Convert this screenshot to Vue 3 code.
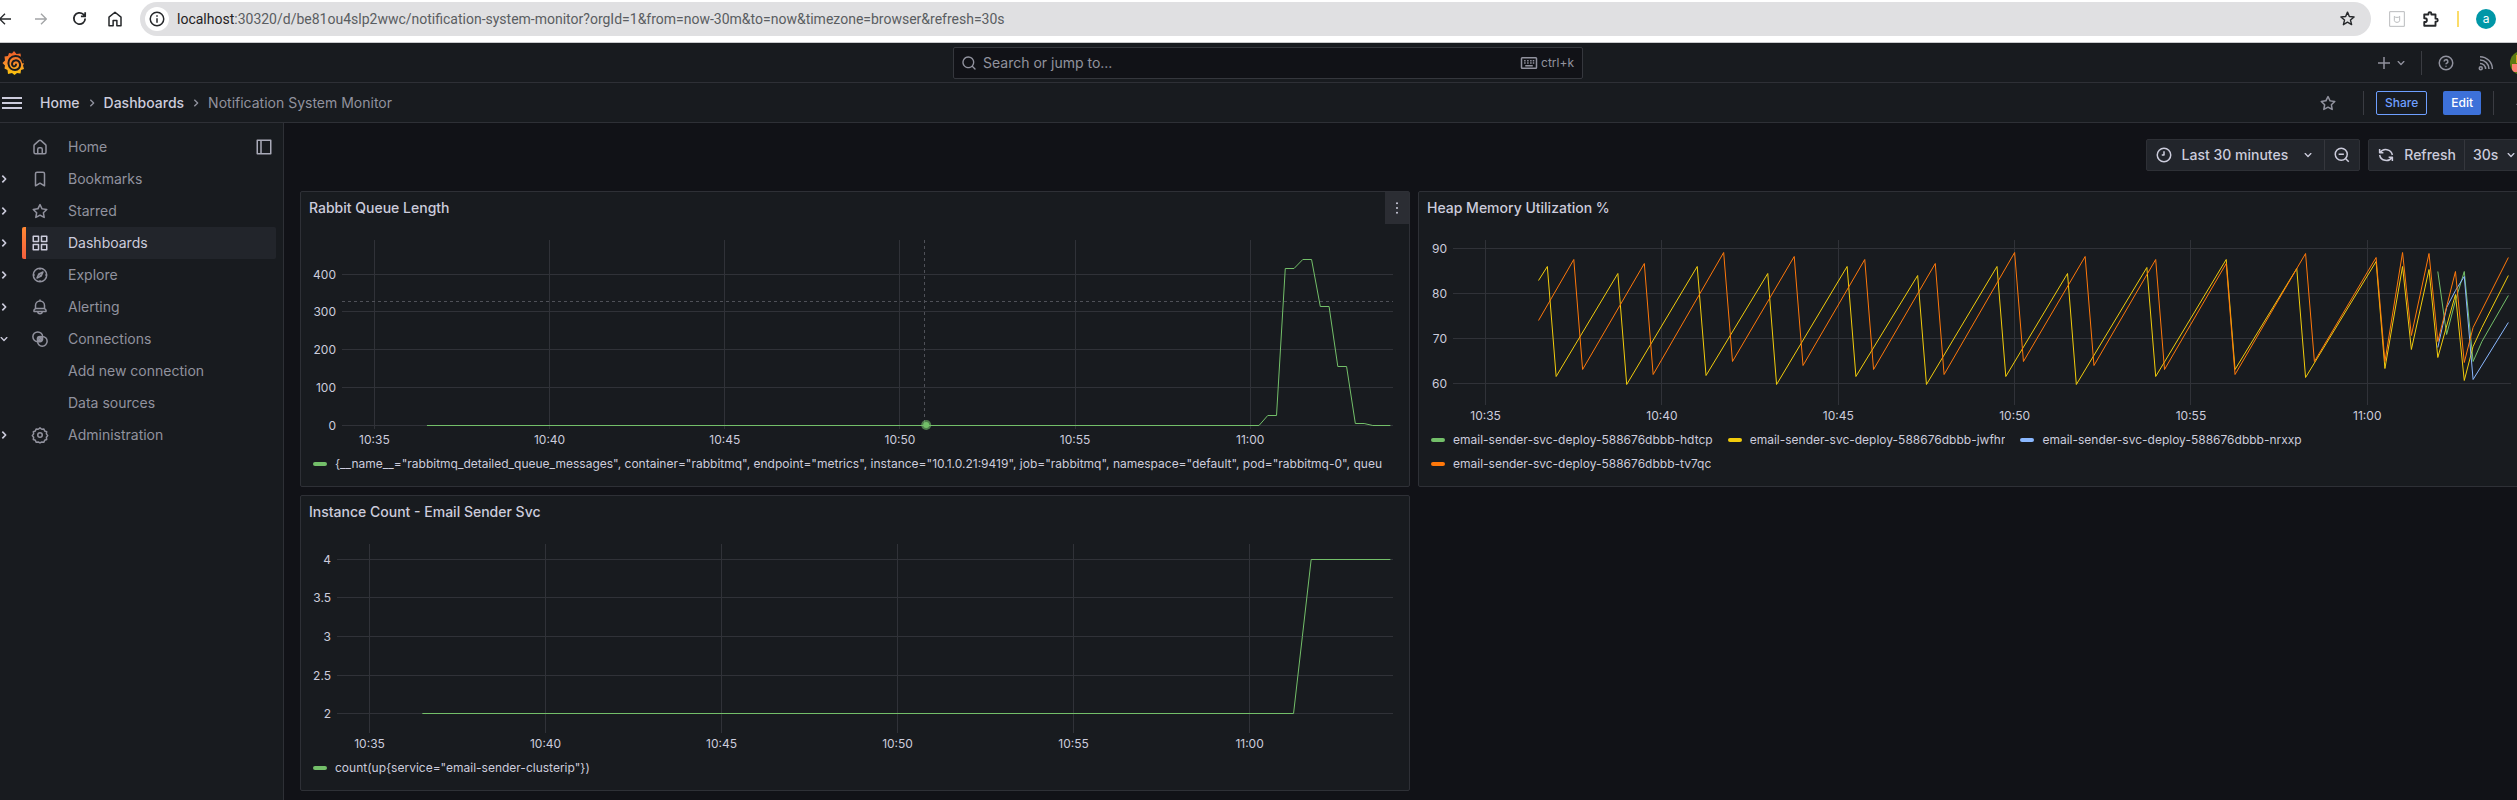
<script setup>
import { h } from 'vue'

const fills = {
  home: 'M20,8h0L14,2.74a3,3,0,0,0-4,0L4,8a3,3,0,0,0-1,2.26V19a3,3,0,0,0,3,3H18a3,3,0,0,0,3-3V10.25A3,3,0,0,0,20,8ZM14,20H10V15a1,1,0,0,1,1-1h2a1,1,0,0,1,1,1Zm5-1a1,1,0,0,1-1,1H16V15a3,3,0,0,0-3-3H11a3,3,0,0,0-3,3v5H6a1,1,0,0,1-1-1V10.25a1,1,0,0,1,.34-.75l6-5.25a1,1,0,0,1,1.32,0l6,5.25a1,1,0,0,1,.34.75Z',
  bookmark: 'M16,2H8A3,3,0,0,0,5,5V21a1,1,0,0,0,.5.87,1,1,0,0,0,1,0L12,18.69l5.5,3.18A1,1,0,0,0,18,22a1,1,0,0,0,.5-.13A1,1,0,0,0,19,21V5A3,3,0,0,0,16,2Zm1,17.27-4.5-2.6a1,1,0,0,0-1,0L7,19.27V5A1,1,0,0,1,8,4h8a1,1,0,0,1,1,1Z',
  star: 'M22,9.67A1,1,0,0,0,21.14,9l-5.69-.83L12.9,3a1,1,0,0,0-1.8,0L8.55,8.16,2.86,9a1,1,0,0,0-.81.68,1,1,0,0,0,.25,1l4.13,4-1,5.68A1,1,0,0,0,6.9,21.44L12,18.77l5.1,2.67a.93.93,0,0,0,.46.12,1,1,0,0,0,.59-.19,1,1,0,0,0,.4-1l-1-5.68,4.13-4A1,1,0,0,0,22,9.67Zm-6.15,4a1,1,0,0,0-.29.88l.72,4.2-3.76-2a1.06,1.06,0,0,0-.94,0l-3.76,2,.72-4.2a1,1,0,0,0-.29-.88l-3-3,4.21-.61a1,1,0,0,0,.76-.55L12,5.7l1.88,3.82a1,1,0,0,0,.76.55l4.21.61Z',
  down: 'M17,9.17a1,1,0,0,0-1.41,0L12,12.71,8.46,9.17a1,1,0,0,0-1.41,0,1,1,0,0,0,0,1.42l4.24,4.24a1,1,0,0,0,1.42,0L17,10.59A1,1,0,0,0,17,9.17Z',
  search: 'M21.71,20.29,18,16.61A9,9,0,1,0,16.61,18l3.68,3.68a1,1,0,0,0,1.42,0A1,1,0,0,0,21.71,20.29ZM11,18a7,7,0,1,1,7-7A7,7,0,0,1,11,18Z',
  dots: 'M12 3.500a1.500 1.500 0 1 1 0 3a1.500 1.500 0 0 1 0-3zM12 10.500a1.500 1.500 0 1 1 0 3a1.500 1.500 0 0 1 0-3zM12 17.500a1.500 1.500 0 1 1 0 3a1.500 1.500 0 0 1 0-3z',
}
const strokes = {
  right: 'M9.5 7l5 5l-5 5',
  up: 'M7 14.5l5-5l5 5',
  apps: 'M3 3h7v7H3zM14 3h7v7h-7zM3 14h7v7H3zM14 14h7v7h-7z',
  compass: 'M12 3a9 9 0 1 0 0 18a9 9 0 0 0 0-18zM16 8l-2.5 5.5L8 16l2.5-5.5zM10.5 10.5l3 3M12 3v2M12 19v2M3 12h2M19 12h2',
  bell: 'M12 2v2M6 14v-4a6 6 0 0 1 12 0v4l2 2v2H4v-2zM6 14h12M9 18a3 3 0 0 0 6 0',
  link: 'M9 2.500a6.500 6.500 0 1 0 0 13a6.500 6.500 0 0 0 0-13zM15 8.500a6.500 6.500 0 1 0 0 13a6.500 6.500 0 0 0 0-13zM12 8.500a3.500 3.500 0 1 0 0 7a3.500 3.500 0 0 0 0-7zM10.500 13.500l3-3',
  cog: 'M12 2.500l2.300 1.800l2.900-.4l1 2.700l2.700 1l-.4 2.900l1.800 2.300l-1.800 2.300l.4 2.900l-2.700 1l-1 2.700l-2.900-.4l-2.300 1.200l-2.300-1.200l-2.900.4l-1-2.700l-2.700-1l.4-2.900l-1.800-2.300l1.800-2.300l-.4-2.900l2.700-1l1-2.700l2.900.4zM12 9a3 3 0 1 0 0 6a3 3 0 0 0 0-6z',
  dock: 'M3 3h18v18H3zM8 3v18',
  plus: 'M12 4v16M4 12h16',
  help: 'M12 3a9 9 0 1 0 0 18a9 9 0 0 0 0-18zM9.500 10a2.500 2.500 0 1 1 3.500 2.300c-.7.3-1 .7-1 1.400M12 15.800v1.200',
  rss: 'M5 17a2 2 0 1 0 0 4a2 2 0 0 0 0-4zM4 12.500a7.500 7.500 0 0 1 7.500 7.500M4 8a12 12 0 0 1 12 12M4 3.500a16.500 16.500 0 0 1 16.500 16.500',
  clock: 'M12 3a9 9 0 1 0 0 18a9 9 0 0 0 0-18zM12 7v5H9',
  zoomOut: 'M11 3a8 8 0 1 0 0 16a8 8 0 0 0 0-16zM17 17l4 4M7.500 11h7',
  sync: 'M3.500 4v5h5M4 9a9 9 0 0 1 16.500 3M20.500 20v-5h-5M20 15a9 9 0 0 1-16.500-3',
  keyboard: 'M3 5h18a1 1 0 0 1 1 1v12a1 1 0 0 1-1 1H3a1 1 0 0 1-1-1V6a1 1 0 0 1 1-1zM5.500 9h2M9.500 9h2M13.500 9h2M17 9h2M5.500 12h2M9.500 12h2M13.500 12h2M17 12h2M7 15.500h10',
  back: 'M21 12H4M12 4l-8 8l8 8',
  forward: 'M3 12h17M12 4l8 8l-8 8',
  reload: 'M20 12a8 8 0 1 1-2.500-5.800L20 8.500M20 3v6h-6',
  house: 'M4 21V9.500L12 3l8 6.500V21h-5.500v-7h-5v7z',
  info: 'M12 3a9 9 0 1 0 0 18a9 9 0 0 0 0-18zM12 11v6M12 7v2',
  chromeStar: 'M12 3l2.600 6.200l6.700.6l-5.100 4.400l1.600 6.500L12 17.200l-5.800 3.500l1.600-6.500l-5.100-4.400l6.700-.6z',
  puzzle: 'M3 6h5.500V5a2 2 0 0 1 4 0v1H18v5.500h1a2 2 0 0 1 0 4h-1V21H3v-5h1a2 2 0 0 0 0-5H3z',
  shield: 'M1 1h22v22H1zM8 8l2 1.500h4L16 8v6c0 2-2 3-4 3s-4-1-4-3z',
}
const Icon = ({ name, size = 16, weight = 2 }) =>
  h('svg', { viewBox: '0 0 24 24', width: size, height: size, 'aria-hidden': 'true' }, [
    fills[name]
      ? h('path', { d: fills[name], fill: 'currentColor' })
      : h('path', { d: strokes[name], fill: 'none', stroke: 'currentColor', 'stroke-width': weight, 'stroke-linejoin': 'round' }),
  ])
Icon.props = ['name', 'size', 'weight']

const menu = [
  { label: 'Home', icon: 'home' },
  { label: 'Bookmarks', icon: 'bookmark', arrow: 'right' },
  { label: 'Starred', icon: 'star', arrow: 'right' },
  { label: 'Dashboards', icon: 'apps', arrow: 'right', active: true },
  { label: 'Explore', icon: 'compass', arrow: 'right' },
  { label: 'Alerting', icon: 'bell', arrow: 'right' },
  { label: 'Connections', icon: 'link', arrow: 'down' },
  { label: 'Add new connection' },
  { label: 'Data sources' },
  { label: 'Administration', icon: 'cog', arrow: 'right' },
]

const green = '#73bf69'
const yellow = '#f2cc0c'
const blue = '#8ab8ff'
const orange = '#ff780a'

// Time runs in 15-second steps counted from 11:00; every panel spans the same 30 minutes.
const tMin = -103.7
const tSpan = 120
const ticks = [
  [-100, '10:35'], [-80, '10:40'], [-60, '10:45'], [-40, '10:50'], [-20, '10:55'], [0, '11:00'],
]

const panels = [
  {
    id: 'queue', title: 'Rabbit Queue Length', height: 186, min: 0, max: 491, menu: true,
    y: [400, 300, 200, 100, 0],
    cursor: { t: -37.2, v: 328, dot: -37 },
    series: [
      {
        name: '{__name__="rabbitmq_detailed_queue_messages", container="rabbitmq", endpoint="metrics", instance="10.1.0.21:9419", job="rabbitmq", namespace="default", pod="rabbitmq-0", queu',
        color: green,
        data: [[-94, 0], [1, 0], [2, 24], [3, 24], [4, 415], [5, 415], [6, 439], [7, 439], [8, 315], [9, 315], [10, 156], [11, 156], [12, 5], [13, 5], [14, 0], [16, 0]],
      },
    ],
  },
  {
    id: 'heap', title: 'Heap Memory Utilization %', height: 162, min: 56, max: 92,
    y: [90, 80, 70, 60],
    series: [
      {
        name: 'email-sender-svc-deploy-588676dbbb-hdtcp', color: green,
        data: [[8, 85], [9, 70.8], [10, 78.4], [11, 85], [12, 64.8], [13, 69.4], [16, 79.6]],
      },
      {
        name: 'email-sender-svc-deploy-588676dbbb-jwfhr', color: yellow,
        data: [[-94, 82.9], [-93, 86], [-92, 61.5], [-85, 84.4], [-84, 59.7], [-76, 86], [-75, 61.7], [-68, 84.4], [-67, 59.7], [-59, 86], [-58, 61.5], [-51, 84.1], [-50, 59.7], [-42, 86], [-41, 61.5], [-34, 84.4], [-33, 59.7], [-25, 85.8], [-24, 61.5], [-16, 87.6], [-15, 63], [-8, 85.7], [-7, 61.3], [1, 87.3], [2, 63.3], [4, 86], [5, 67.5], [7, 85.5], [8, 65.7], [10, 79.8], [11, 60.6], [12, 68.2], [13, 72.4], [16, 84]],
      },
      {
        name: 'email-sender-svc-deploy-588676dbbb-nrxxp', color: blue,
        data: [[8, 67.9], [9, 76.8], [10, 80.6], [11, 83.9], [12, 60.9], [16, 73.6]],
      },
      {
        name: 'email-sender-svc-deploy-588676dbbb-tv7qc', color: orange,
        data: [[-94, 74.1], [-90, 87.6], [-89, 63], [-82, 86.7], [-81, 61.9], [-73, 89.1], [-72, 64.8], [-65, 88.4], [-64, 63.9], [-57, 87.6], [-56, 63], [-49, 86.7], [-48, 61.9], [-40, 89.1], [-39, 64.8], [-32, 88.4], [-31, 63.9], [-24, 87.6], [-23, 63], [-16, 86.7], [-15, 61.9], [-7, 88.9], [-6, 64.8], [1, 88.1], [2, 64.8], [4, 89.1], [5, 70.6], [7, 88.9], [8, 69.2], [10, 84.9], [11, 64.6], [12, 72.4], [16, 88.1]],
      },
    ],
  },
  {
    id: 'instances', title: 'Instance Count - Email Sender Svc', height: 186, min: 1.8, max: 4.2,
    y: [4, 3.5, 3, 2.5, 2],
    series: [
      { name: 'count(up{service="email-sender-clusterip"})', color: green, data: [[-94, 2], [5, 2], [6, 3], [7, 4], [16, 4]] },
    ],
  },
]

const xOf = (t) => ((t - tMin) / tSpan) * 100
const yOf = (p, v) => Math.floor(((p.max - v) / (p.max - p.min)) * (p.height - 1)) + 0.5
const points = (p, s) =>
  s.data.map(([t, v]) => `${(xOf(t) * 10).toFixed(2)},${yOf(p, v)}`).join(' ')
</script>

<template>
  <div class="window">
    <header class="browser">
      <button class="bare" aria-label="Back"><Icon name="back" size="16" /></button>
      <button class="bare faded" aria-label="Forward"><Icon name="forward" size="16" /></button>
      <button class="bare" aria-label="Reload"><Icon name="reload" size="17" weight="2.5" /></button>
      <button class="bare" aria-label="Browser home"><Icon name="house" size="18" weight="2" /></button>
      <div class="address">
        <span class="site"><Icon name="info" size="18" /></span>
        <label for="url">localhost</label>
        <input id="url" type="text" value=":30320/d/be81ou4slp2wwc/notification-system-monitor?orgId=1&from=now-30m&to=now&timezone=browser&refresh=30s" />
        <button class="bare" aria-label="Bookmark page"><Icon name="chromeStar" size="17" /></button>
      </div>
      <div class="extensions">
        <Icon class="shield" name="shield" size="16" weight="1.5" />
        <Icon name="puzzle" size="18" weight="2.5" />
        <span class="bar"></span>
        <button class="profile" aria-label="Profile">a</button>
      </div>
    </header>

    <div class="shell">
      <div class="topnav">
        <a href="#" class="logo" aria-label="Grafana">
          <svg viewBox="0 0 44 48" width="22" height="24" aria-hidden="true">
            <defs>
              <linearGradient id="flame" x1="0" y1="0" x2="0" y2="1">
                <stop offset="0" stop-color="#f05a28" />
                <stop offset="0.55" stop-color="#f7902b" />
                <stop offset="1" stop-color="#fbca0a" />
              </linearGradient>
            </defs>
            <path fill="url(#flame)" d="M24 0l5 6l8 -1l1 8c4 3 6 7 6 12l-2 4l2 7l-6 2l-1 7l-7 -1l-5 4l-5 -4l-8 2l-1 -8l-6 -3l1 -6l-5 -5l5 -5l-1 -8l7 -1l2 -6l6 1z" />
            <path fill="none" stroke="#181b1f" stroke-width="4" stroke-linecap="round" d="M42 23C40 14 34 10 27 10C18 10 12 17 13 26C14 34 20 38 26 38C33 38 37 32 36 26C35 20 30 18 26 19C21 20 19 25 21 29C23 32 28 31 28 27" />
          </svg>
        </a>
        <div class="search">
          <Icon name="search" size="16" />
          <input id="search" type="text" placeholder="Search or jump to..." aria-label="Search or jump to" />
          <Icon name="keyboard" size="18" />
          <kbd>ctrl+k</kbd>
        </div>
        <div class="tools">
          <button class="bare new" aria-label="New"><Icon name="plus" size="18" /><Icon name="down" size="16" /></button>
          <span class="divider"></span>
          <button class="bare square" aria-label="Help"><Icon name="help" size="18" /></button>
          <button class="bare square" aria-label="News"><Icon name="rss" size="18" /></button>
          <button class="avatar" aria-label="Account">
            <svg viewBox="0 0 24 24" width="24" height="24" aria-hidden="true">
              <rect width="24" height="24" fill="#5d7a12" />
              <path fill="#f2644f" d="M7 3h17v21H7z" />
              <path fill="#fa8072" d="M2 13h5v8H2z" />
              <path fill="#d9a520" d="M6 4h2v8H6z" />
            </svg>
          </button>
        </div>
      </div>

      <div class="crumbbar">
        <button class="burger" aria-label="Menu"><i></i><i></i><i></i></button>
        <nav class="crumbs" aria-label="Breadcrumbs">
          <a href="#">Home</a><Icon name="right" size="16" />
          <a href="#">Dashboards</a><Icon name="right" size="16" />
          <span>Notification System Monitor</span>
        </nav>
        <div class="actions">
          <button class="bare square star" aria-label="Mark as favorite"><Icon name="star" size="18" /></button>
          <span class="divider"></span>
          <button class="share">Share</button>
          <button class="edit">Edit</button>
          <span class="divider"></span>
          <button class="bare fold" aria-label="Hide controls"><Icon name="up" size="16" /></button>
        </div>
      </div>

      <div class="body">
        <nav class="sidebar" aria-label="Main">
          <ul>
            <li v-for="m in menu" :key="m.label">
              <button v-if="m.arrow" class="bare arrow" :aria-label="'Toggle ' + m.label">
                <Icon :name="m.arrow" size="16" weight="2.5" />
              </button>
              <span v-else class="arrow"></span>
              <a href="#" :class="{ active: m.active }">
                <Icon v-if="m.icon" :name="m.icon" size="18" />
                <span v-else class="blank"></span>
                {{ m.label }}
              </a>
              <button v-if="m.icon === 'home'" class="bare dock" aria-label="Undock menu"><Icon name="dock" size="18" /></button>
            </li>
          </ul>
        </nav>

        <main>
          <div class="controls">
            <div class="group">
              <button><Icon name="clock" size="18" />Last 30 minutes<Icon class="caret" name="down" size="16" /></button>
              <button class="zoom" aria-label="Zoom out"><Icon name="zoomOut" size="18" /></button>
            </div>
            <div class="group">
              <button><Icon name="sync" size="18" />Refresh</button>
              <label class="every">
                <select aria-label="Refresh interval"><option>30s</option></select>
                <Icon name="down" size="16" />
              </label>
            </div>
          </div>

          <div class="grid">
            <section v-for="p in panels" :key="p.id" class="panel">
              <div class="head">
                <h2>{{ p.title }}</h2>
                <button v-if="p.menu" class="more" aria-label="Panel menu"><Icon name="dots" size="16" /></button>
              </div>
              <div class="plot" :class="p.id">
                <svg class="chart" width="100%" :height="p.height + 26" role="img" :aria-label="p.title">
                  <g class="lines">
                    <line v-for="v in p.y" :key="v" x1="0" x2="100%" :y1="yOf(p, v)" :y2="yOf(p, v)" />
                    <line v-for="[t, l] in ticks" :key="l" :x1="xOf(t) + '%'" :x2="xOf(t) + '%'" y1="0" :y2="p.height + 3" />
                  </g>
                  <g v-if="p.cursor" class="cursor">
                    <line x1="0" x2="100%" :y1="yOf(p, p.cursor.v)" :y2="yOf(p, p.cursor.v)" />
                    <line :x1="xOf(p.cursor.t) + '%'" :x2="xOf(p.cursor.t) + '%'" y1="0" :y2="p.height" />
                  </g>
                  <svg width="100%" :height="p.height" :viewBox="`0 0 1000 ${p.height}`" preserveAspectRatio="none" class="curves">
                    <polyline v-for="s in p.series" :key="s.name" :points="points(p, s)" :stroke="s.color" />
                  </svg>
                  <g v-if="p.cursor" :fill="p.series[0].color">
                    <circle :cx="xOf(p.cursor.dot) + '%'" :cy="p.height - 1" r="5" opacity="0.6" />
                    <circle :cx="xOf(p.cursor.dot) + '%'" :cy="p.height - 1" r="3" />
                  </g>
                  <text v-for="v in p.y" :key="'y' + v" x="-6" :y="yOf(p, v) + 4" text-anchor="end">{{ v }}</text>
                  <text v-for="[t, l] in ticks" :key="'x' + l" :x="xOf(t) + '%'" :y="p.height + 18" text-anchor="middle">{{ l }}</text>
                </svg>
              </div>
              <ul class="legend">
                <li v-for="s in p.series" :key="s.name">
                  <i :style="{ background: s.color }"></i><span>{{ s.name }}</span>
                </li>
              </ul>
            </section>
          </div>
        </main>
      </div>
    </div>
  </div>
</template>

<style>
body {
  background: #111217;
}
</style>

<style scoped>
* {
  box-sizing: border-box;
}
.window {
  --line: #2e3036;
  --text: #ccccdc;
  --dim: #91929e;
  display: flex;
  flex-direction: column;
  min-height: 100vh;
  overflow: hidden;
  background: #111217;
  color: var(--text);
  font: 14px/22px Inter, "Liberation Sans", sans-serif;
}
svg {
  display: block;
  flex: none;
}
button,
input,
select {
  margin: 0;
  padding: 0;
  border: 0;
  outline: 0;
  background: none;
  color: inherit;
  font: inherit;
}
ul {
  margin: 0;
  padding: 0;
  list-style: none;
}
a {
  color: inherit;
  text-decoration: none;
}
.bare {
  display: flex;
  align-items: center;
  justify-content: center;
}

/* Browser toolbar */
.browser {
  display: flex;
  align-items: center;
  height: 43px;
  padding: 0 21px 5px 0;
  border-bottom: 1px solid #c9cacc;
  background: #fff;
  color: #26282b;
}
.browser > .bare {
  width: 36px;
}
.browser > .bare:first-child {
  width: 24px;
  justify-content: flex-start;
  margin-left: -3px;
}
.browser > .faded {
  width: 40px;
  color: #a2a4a6;
}
.address {
  display: flex;
  flex: 1;
  align-items: center;
  height: 34px;
  margin-left: 7px;
  padding: 0 15px 0 5px;
  border-radius: 17px;
  background: #e0e0e2;
  font: 14px/20px Roboto, "Noto Sans", sans-serif;
}
.address label {
  color: #1f2023;
}
.address input {
  flex: 1;
  min-width: 0;
  color: #5a5d61;
}
.site {
  display: grid;
  place-items: center;
  width: 24px;
  height: 24px;
  margin-right: 8px;
  border-radius: 12px;
  background: #fff;
}
.extensions {
  display: flex;
  align-items: center;
  gap: 17px;
  margin-left: 18px;
}
.shield {
  color: #b9bbbd;
}
.bar {
  width: 2px;
  height: 16px;
  background: #fbdc6a;
}
.profile {
  width: 20px;
  height: 20px;
  border-radius: 10px;
  background: #0097a7;
  color: #fff;
  font-size: 12px;
  line-height: 18px;
}

/* Application frame: a little wider than the window, its right edge is cut */
.shell {
  display: flex;
  flex: 1;
  flex-direction: column;
  width: calc(100% + 19px);
}
.topnav,
.crumbbar {
  display: flex;
  align-items: center;
  height: 40px;
  border-bottom: 1px solid var(--line);
  background: #181b1f;
}
.topnav {
  display: grid;
  grid-template-columns: 1fr 630px 1fr;
  padding: 0 2px;
}
.logo {
  width: 22px;
}
.search {
  display: flex;
  align-items: center;
  height: 32px;
  padding: 0 8px 0 7px;
  border: 1px solid #35373d;
  border-radius: 2px;
  background: #111217;
  color: var(--dim);
}
.search input {
  flex: 1;
  min-width: 0;
  margin-left: 6px;
}
.search input::placeholder {
  color: var(--dim);
  opacity: 1;
}
.search kbd {
  margin-left: 3px;
  font: 12px/18px Inter, sans-serif;
}
.tools {
  display: flex;
  align-items: center;
  justify-content: flex-end;
  gap: 8px;
  color: var(--dim);
}
.new {
  margin-right: 4px;
}
.square {
  width: 32px;
  height: 32px;
}
.divider {
  width: 1px;
  height: 24px;
  background: #3a3c42;
}
.avatar {
  width: 24px;
  height: 24px;
  overflow: hidden;
  border-radius: 12px;
}
.crumbbar {
  padding: 0 8px 0 2px;
}
.burger {
  display: grid;
  gap: 3px;
  width: 20px;
}
.burger i {
  height: 2px;
  background: var(--text);
}
.crumbs {
  display: flex;
  flex: 1;
  align-items: center;
  gap: 4px;
  margin-left: 18px;
  color: var(--dim);
}
.crumbs a {
  color: var(--text);
  font-weight: 500;
}
.actions {
  display: flex;
  align-items: center;
  gap: 12px;
  color: var(--dim);
}
.star {
  margin-right: 7px;
}
.share,
.edit {
  height: 24px;
  padding: 0 8px;
  border-radius: 2px;
  font-size: 12px;
  font-weight: 500;
  line-height: 22px;
}
.share {
  border: 1px solid #6e9fff;
  color: #6e9fff;
}
.edit {
  margin-left: 4px;
  background: #3d71d9;
  color: #fff;
}
.fold {
  margin-left: 6px;
}

/* Sidebar */
.body {
  display: flex;
  flex: 1;
}
.sidebar {
  flex: none;
  width: 284px;
  padding: 8px 7px 0 0;
  border-right: 1px solid var(--line);
  background: #181b1f;
  color: var(--dim);
}
.sidebar li {
  display: flex;
  align-items: center;
  height: 32px;
}
.arrow {
  flex: none;
  width: 16px;
  margin: 0 10px 0 -4px;
  color: var(--text);
}
.sidebar a {
  display: flex;
  flex: 1;
  align-items: center;
  gap: 19px;
  height: 32px;
  padding-left: 9px;
  border-radius: 2px;
}
.sidebar a.active {
  background: linear-gradient(#ff8833, #f55f3e) 0 0 / 4px 100% no-repeat #22252b;
  color: var(--text);
}
.blank {
  width: 18px;
}
.dock {
  margin-right: 3px;
  color: #a9aab8;
}

/* Dashboard */
main {
  flex: 1;
  min-width: 0;
  padding: 16px 8px 8px 16px;
}
.controls {
  display: flex;
  justify-content: flex-end;
  gap: 8px;
  margin-bottom: 20px;
}
.group {
  display: flex;
  height: 32px;
  border: 1px solid #2e3036;
  border-radius: 2px;
  background: #22252b;
  font-weight: 500;
}
.group button,
.every {
  display: flex;
  align-items: center;
  gap: 9px;
  padding: 0 8px;
}
.group > * + * {
  border-left: 1px solid #35373d;
}
.caret {
  margin-left: 3px;
}
.every {
  gap: 4px;
}
.every select {
  appearance: none;
}
.grid {
  display: grid;
  grid-template-columns: 1fr 1fr;
  gap: 8px;
}
.panel {
  min-width: 0;
  padding-bottom: 10px;
  border: 1px solid var(--line);
  border-radius: 2px;
  background: #181b1f;
}
.head {
  display: flex;
  align-items: center;
  justify-content: space-between;
  height: 32px;
  padding-left: 8px;
}
h2 {
  margin: 0;
  font-size: 14px;
  font-weight: 500;
}
.more {
  display: grid;
  place-items: center;
  width: 24px;
  height: 32px;
  background: #2b2d33;
}
.plot {
  padding: 16px 16px 0 41px;
}
.plot.heap {
  padding-left: 34px;
}
.plot.instances {
  padding-left: 36px;
}
.chart {
  overflow: visible;
}
.lines {
  stroke: #303238;
  shape-rendering: crispEdges;
}
.cursor {
  stroke: #4f5158;
  stroke-dasharray: 3 3;
  shape-rendering: crispEdges;
}
.curves {
  overflow: visible;
}
.curves polyline {
  fill: none;
  stroke-width: 1px;
  vector-effect: non-scaling-stroke;
}
text {
  fill: var(--text);
  font-size: 12px;
}
.legend {
  display: flex;
  flex-wrap: wrap;
  column-gap: 15px;
  padding: 0 8px 0 12px;
  font-size: 12px;
  line-height: 24px;
}
.legend li {
  display: flex;
  align-items: center;
  gap: 8px;
  min-width: 0;
}
.legend i {
  flex: none;
  width: 14px;
  height: 4px;
  border-radius: 2px;
}
.legend span {
  overflow: hidden;
  white-space: nowrap;
}
</style>
